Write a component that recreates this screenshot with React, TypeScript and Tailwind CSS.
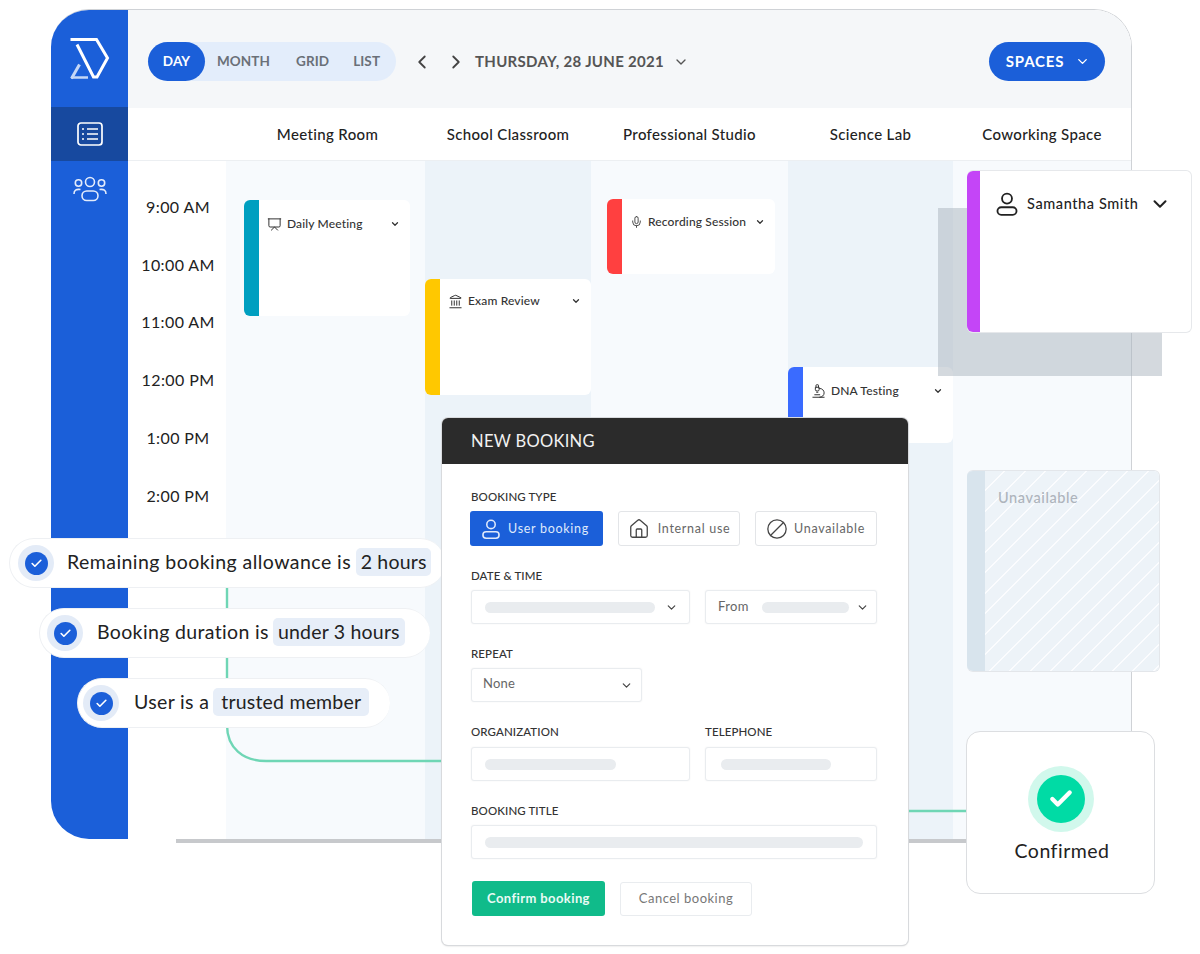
import { Ban, Check, ChevronDown, ChevronLeft, ChevronRight, House, Landmark, Mic, Microscope, Presentation, type LucideIcon } from 'lucide-react';

const font = "font-['Lato','Liberation_Sans',sans-serif]";
const labelClass = 'block h-[14px] text-[11.5px] leading-[14px] font-medium tracking-[0.1px] text-[#333]';
const fieldClass = 'flex h-[34px] items-center rounded-[3px] border border-[#e9ecef] bg-white shadow-[0_0_2px_rgba(0,0,0,0.06)]';
const barClass = 'h-[11px] rounded-full bg-[#e9ecef]';

const days = ['Meeting Room', 'School Classroom', 'Professional Studio', 'Science Lab', 'Coworking Space'];
const times = ['9:00 AM', '10:00 AM', '11:00 AM', '12:00 PM', '1:00 PM', '2:00 PM'];

function UserIcon({ className }: { className: string }) {
  return (
    <svg viewBox="0 0 24 24" fill="none" stroke="currentColor" strokeWidth="1.7" className={className}>
      <circle cx="12" cy="7" r="4.6" />
      <rect x="3.2" y="15" width="17.6" height="7" rx="3.5" />
    </svg>
  );
}

function Logo() {
  return (
    <svg viewBox="0 0 42 46" fill="none" className="h-[46px] w-[42px]" strokeLinejoin="miter">
      <path d="M2.5 4.5H28.5L39.5 23L29 42H25.5L9 9.5" stroke="#fff" strokeWidth="3" />
      <path d="M3.5 43.5L11.5 29.5" stroke="#c5d6f6" strokeWidth="3" />
      <path d="M3 42.5H20" stroke="#c5d6f6" strokeWidth="2.4" />
    </svg>
  );
}

function EventCard({
  title,
  Icon,
  strip,
  size,
  iconClass,
  rowClass,
}: {
  title: string;
  Icon: LucideIcon;
  strip: string;
  size: string;
  iconClass: string;
  rowClass: string;
}) {
  return (
    <div className={`flex ${size} rounded-[6px] bg-white`}>
      <div className={`w-[15px] shrink-0 rounded-l-[6px] ${strip}`} />
      <div className={`flex h-[16px] flex-1 items-center pr-[10px] pl-[8px] text-[#333] ${rowClass}`}>
        <Icon className={`shrink-0 ${iconClass}`} strokeWidth={1.6} />
        <span className="ml-[5px] flex-1 text-[12px] font-medium tracking-[0.15px]">{title}</span>
        <ChevronDown className="h-[10px] w-[10px]" strokeWidth={3} />
      </div>
    </div>
  );
}

function CheckPill({
  text,
  chip,
  pos,
  textClass,
  chipClass,
}: {
  text: string;
  chip: string;
  pos: string;
  textClass: string;
  chipClass: string;
}) {
  return (
    <div className={`absolute flex h-[50px] items-center rounded-full border border-r-0 border-[#eef0f3] bg-white ${pos}`}>
      <div className="flex h-[36px] w-[36px] shrink-0 items-center justify-center rounded-full bg-[#e3ebf7]">
        <div className="flex h-[23px] w-[23px] items-center justify-center rounded-full bg-[#1b5fd9]">
          <Check className="h-[13px] w-[13px] text-white" strokeWidth={3} />
        </div>
      </div>
      <span className={`-mt-[2px] text-[19.5px] tracking-[0.35px] whitespace-nowrap text-[#222] ${textClass}`}>{text}</span>
      <span className={`-mt-[2px] flex h-[28px] items-center justify-center rounded-[5px] bg-[#e7eef8] text-[19.5px] tracking-[0.2px] whitespace-nowrap text-[#222] ${chipClass}`}>
        {chip}
      </span>
    </div>
  );
}

function TypeButton({ children, className }: { children: React.ReactNode; className: string }) {
  return (
    <div className={`flex h-[35px] items-center justify-center rounded-[3px] pt-[1px] text-[12.5px] tracking-[0.7px] ${className}`}>
      {children}
    </div>
  );
}

export default function App() {
  return (
    <div className={`relative h-[954px] w-[1200px] overflow-hidden bg-white pt-[9px] pl-[51px] ${font}`}>
      <div className="flex h-[830px] w-[1081px] overflow-hidden rounded-[38px] rounded-br-none border-t border-r border-[#cfd2d6]">
        <aside className="flex w-[77px] shrink-0 flex-col items-center bg-[#1b5fd9]">
          <div className="flex h-[97px] w-full items-center justify-center pr-[1px] pb-[1px]">
            <Logo />
          </div>
          <div className="flex h-[54px] w-full items-center justify-center bg-[#17499f]">
            <svg viewBox="0 0 26 24" fill="none" stroke="#fff" strokeWidth="1.7" className="h-[24px] w-[26px]">
              <rect x="1" y="1" width="24" height="22" rx="3" />
              <path d="M10 7H21M10 12H21M10 17H21" />
              <path d="M5 7H7M5 12H7M5 17H7" />
            </svg>
          </div>
          <svg viewBox="0 0 36 26" fill="none" stroke="#e3ebfb" strokeWidth="1.6" className="mt-[15px] h-[26px] w-[36px]">
            <circle cx="18" cy="6" r="4.5" />
            <circle cx="6.5" cy="7" r="3.2" />
            <circle cx="29.5" cy="7" r="3.2" />
            <rect x="10" y="15" width="16" height="9.5" rx="4.7" />
            <path d="M2 18C2 14 4 13 8.5 13.5M34 18C34 14 32 13 27.5 13.5" />
          </svg>
        </aside>

        <main className="flex min-w-0 flex-1 flex-col bg-white">
          <div className="flex h-[98px] shrink-0 items-start justify-between bg-[#f5f7f9] pt-[32px] pr-[26px] pl-[20px]">
            <div className="flex items-center">
              <div className="flex h-[39px] w-[248px] items-center rounded-full bg-[#e3edfb] text-[13.5px] font-bold tracking-[0.1px] text-[#6a7078]">
                <div className="flex h-[39px] w-[57px] items-center justify-center rounded-full bg-[#1b5fd9] text-white">DAY</div>
                <span className="ml-[12px] w-[52px] text-center">MONTH</span>
                <span className="ml-[27px]">GRID</span>
                <span className="ml-[24px]">LIST</span>
              </div>
              <ChevronLeft className="ml-[15px] h-[22px] w-[22px] text-[#444]" strokeWidth={2} />
              <ChevronRight className="ml-[12px] h-[22px] w-[22px] text-[#444]" strokeWidth={2} />
              <span className="ml-[8px] text-[15px] font-bold tracking-[0.3px] text-[#555]">THURSDAY, 28 JUNE 2021</span>
              <ChevronDown className="ml-[9px] h-[16px] w-[16px] text-[#555]" strokeWidth={2} />
            </div>
            <div className="flex h-[39px] w-[116px] items-center justify-center gap-[11px] rounded-full bg-[#1b5fd9] pl-[2px] text-[15px] font-bold tracking-[0.8px] text-white">
              SPACES
              <ChevronDown className="h-[15px] w-[15px]" strokeWidth={2.2} />
            </div>
          </div>

          <div className="grid h-[53px] shrink-0 grid-cols-[102px_195px_166px_197px_165px_178px] items-center border-b border-[#eceff2] text-[15px] font-medium tracking-[0.35px] text-[#222]">
            <div />
            {days.map((day) => (
              <div key={day} className="text-center whitespace-nowrap">
                {day}
              </div>
            ))}
          </div>

          <div className="grid min-h-0 flex-1 grid-cols-[98px_199px_166px_197px_165px_178px]">
            <div className="flex flex-col pt-[17px]">
              {times.map((time) => (
                <div key={time} className="flex h-[57.8px] items-center justify-center pl-[2px] text-[16px] tracking-[0.4px] text-[#222]">
                  {time}
                </div>
              ))}
            </div>
            <div className="bg-[#f7fafd] pt-[39px] pl-[18px]">
              <EventCard title="Daily Meeting" Icon={Presentation} strip="bg-[#009fc0]" size="h-[116px] w-[166px]" iconClass="h-[15px] w-[15px]" rowClass="translate-y-[16px]" />
            </div>
            <div className="bg-[#ecf3f9] pt-[118px]">
              <EventCard title="Exam Review" Icon={Landmark} strip="bg-[#ffc800]" size="h-[116px] w-[166px]" iconClass="h-[15px] w-[15px]" rowClass="translate-y-[14px]" />
            </div>
            <div className="bg-[#f7fafd] pt-[38px] pl-[16px]">
              <EventCard title="Recording Session" Icon={Mic} strip="bg-[#ff4040]" size="h-[75px] w-[168px]" iconClass="h-[14px] w-[13px]" rowClass="translate-y-[15px]" />
            </div>
            <div className="bg-[#ecf3f9] pt-[206px]">
              <EventCard title="DNA Testing" Icon={Microscope} strip="bg-[#3a6bff]" size="h-[76px] w-[165px]" iconClass="h-[18px] w-[15px]" rowClass="translate-y-[16px]" />
            </div>
            <div className="bg-[#f7fafd]" />
          </div>
        </main>
      </div>
      <div className="ml-[125px] h-[4px] w-[790px] bg-[#c7c9cc]" />

      {/* connector lines behind the floating cards */}
      <svg viewBox="0 0 1200 954" fill="none" className="absolute top-0 left-0 h-[954px] w-[1200px]">
        <path d="M227 580V725C227 748 243 761 266 761H445M905 811H970" stroke="#6fd6b5" strokeWidth="2.4" />
      </svg>

      {/* shadow block behind the selected booking */}
      <div className="absolute top-[208px] left-[938px] h-[168px] w-[224px] bg-[#aab3bd]/50" />

      <div className="absolute top-[170px] left-[967px] flex h-[163px] w-[225px] rounded-[6px] border border-l-0 border-[#e6e8eb] bg-white">
        <div className="w-[13px] rounded-l-[6px] bg-[#c445f7]" />
        <div className="flex h-[28px] flex-1 translate-y-[19px] items-center pl-[14px] text-[#222]">
          <UserIcon className="h-[26px] w-[26px] text-[#222]" />
          <span className="ml-[7px] text-[14.5px] font-medium tracking-[0.6px]">Samantha Smith</span>
          <ChevronDown className="ml-[10px] h-[22px] w-[22px]" strokeWidth={2.2} />
        </div>
      </div>

      <div className="absolute top-[470px] left-[967px] flex h-[202px] w-[193px] overflow-hidden rounded-[6px] border border-l-0 border-[#e3e6ea]">
        <div className="w-[18px] bg-[#d8e4ed]" />
        <div className="flex-1 bg-[repeating-linear-gradient(135deg,#edf3f8_0,#edf3f8_13.3px,#fbfcfe_13.3px,#fbfcfe_14.5px)] pt-[16px] pl-[13px] text-[14.5px] font-medium tracking-[0.6px] text-[#aeb4bc]">
          Unavailable
        </div>
      </div>

      <div className="absolute top-[731px] left-[966px] flex h-[163px] w-[189px] flex-col items-center rounded-[14px] border border-[#dcdee1] bg-white pt-[34px]">
        <div className="flex h-[66px] w-[66px] items-center justify-center rounded-full bg-[#d1f8ec]">
          <div className="flex h-[48px] w-[48px] items-center justify-center rounded-full bg-[#00dba5]">
            <Check className="h-[26px] w-[26px] text-white" strokeWidth={4} />
          </div>
        </div>
        <span className="mt-[4px] pl-[3px] text-[19.5px] tracking-[0.5px] text-[#222]">Confirmed</span>
      </div>

      <CheckPill text="Remaining booking allowance is" chip="2 hours" pos="top-[538px] left-[9px] w-[436px] pl-[8px]" textClass="ml-[13px] tracking-[0.45px]" chipClass="ml-[5px] w-[75px]" />
      <CheckPill text="Booking duration is" chip="under 3 hours" pos="top-[608px] left-[39px] w-[391px] pl-[7px]" textClass="ml-[14px]" chipClass="ml-[4px] w-[132px]" />
      <CheckPill text="User is a" chip="trusted member" pos="top-[678px] left-[77px] w-[313px] pl-[5px]" textClass="ml-[15px]" chipClass="ml-[4px] w-[156px]" />

      <div className="absolute top-[418px] left-[442px] h-[527px] w-[466px] rounded-[6px] bg-white shadow-[0_0_0_1px_#d8dadd,0_1px_2px_rgba(0,0,0,0.2)]">
        <div className="flex h-[46px] items-center rounded-t-[6px] bg-[#2b2b2b] pl-[29px] text-[16.5px] tracking-[0.3px] text-[#f2f2f2]">
          NEW BOOKING
        </div>
        <div className="box-content w-[406px] pt-[26px] pl-[29px]">
          <span className={labelClass}>BOOKING TYPE</span>
          <div className="mt-[7px] -ml-[1px] grid grid-cols-[133px_122px_122px] gap-[15px]">
            <TypeButton className="gap-[6px] bg-[#1b5fd9] pr-[4px] text-[#dfe9fb]">
              <UserIcon className="h-[22px] w-[22px]" />
              User booking
            </TypeButton>
            <TypeButton className="gap-[8px] border border-[#e3e5e8] text-[#666]">
              <House className="h-[22px] w-[22px] text-[#444]" strokeWidth={1.4} />
              Internal use
            </TypeButton>
            <TypeButton className="gap-[6px] border border-[#e3e5e8] pr-[1px] text-[#666]">
              <Ban className="h-[22px] w-[22px] -scale-x-100 text-[#444]" strokeWidth={1.4} />
              Unavailable
            </TypeButton>
          </div>

          <span className={`mt-[23px] ${labelClass}`}>DATE &amp; TIME</span>
          <div className="mt-[7px] grid grid-cols-[219px_172px] gap-[15px]">
            <div className={`${fieldClass} pr-[11px] pl-[13px]`}>
              <div className={`${barClass} w-[170px]`} />
              <ChevronDown className="ml-auto h-[13px] w-[13px] text-[#444]" strokeWidth={2.2} />
            </div>
            <div className={`${fieldClass} pr-[7px] pl-[12px] text-[13px] tracking-[0.4px] text-[#666]`}>
              From
              <div className={`${barClass} ml-[13px] w-[87px]`} />
              <ChevronDown className="ml-auto h-[13px] w-[13px] text-[#444]" strokeWidth={2.2} />
            </div>
          </div>

          <span className={`mt-[23px] ${labelClass}`}>REPEAT</span>
          <div className={`${fieldClass} mt-[7px] w-[171px] pr-[8px] pl-[11px] text-[13px] tracking-[0.2px] text-[#666]`}>
            <span className="-mt-[2px]">None</span>
            <ChevronDown className="ml-auto h-[13px] w-[13px] text-[#444]" strokeWidth={2.2} />
          </div>

          <div className="mt-[23px] grid grid-cols-[219px_172px] gap-x-[15px] gap-y-[8px]">
            <span className={labelClass}>ORGANIZATION</span>
            <span className={labelClass}>TELEPHONE</span>
            <div className={`${fieldClass} px-[13px]`}>
              <div className={`${barClass} w-[131px]`} />
            </div>
            <div className={`${fieldClass} px-[15px]`}>
              <div className={`${barClass} w-[110px]`} />
            </div>
          </div>

          <span className={`mt-[23px] ${labelClass}`}>BOOKING TITLE</span>
          <div className={`${fieldClass} mt-[7px] px-[13px]`}>
            <div className={`${barClass} w-full`} />
          </div>

          <div className="mt-[22px] flex items-center pl-[1px]">
            <div className="flex h-[35px] w-[133px] items-center justify-center rounded-[3px] bg-[#10bb8a] text-[13px] font-bold tracking-[0.4px] text-[#eafaf5]">
              Confirm booking
            </div>
            <div className="ml-[15px] flex h-[34px] w-[132px] items-center justify-center rounded-[3px] border border-[#e9ecef] text-[13px] tracking-[0.5px] text-[#777]">
              Cancel booking
            </div>
          </div>
        </div>
      </div>
    </div>
  );
}
